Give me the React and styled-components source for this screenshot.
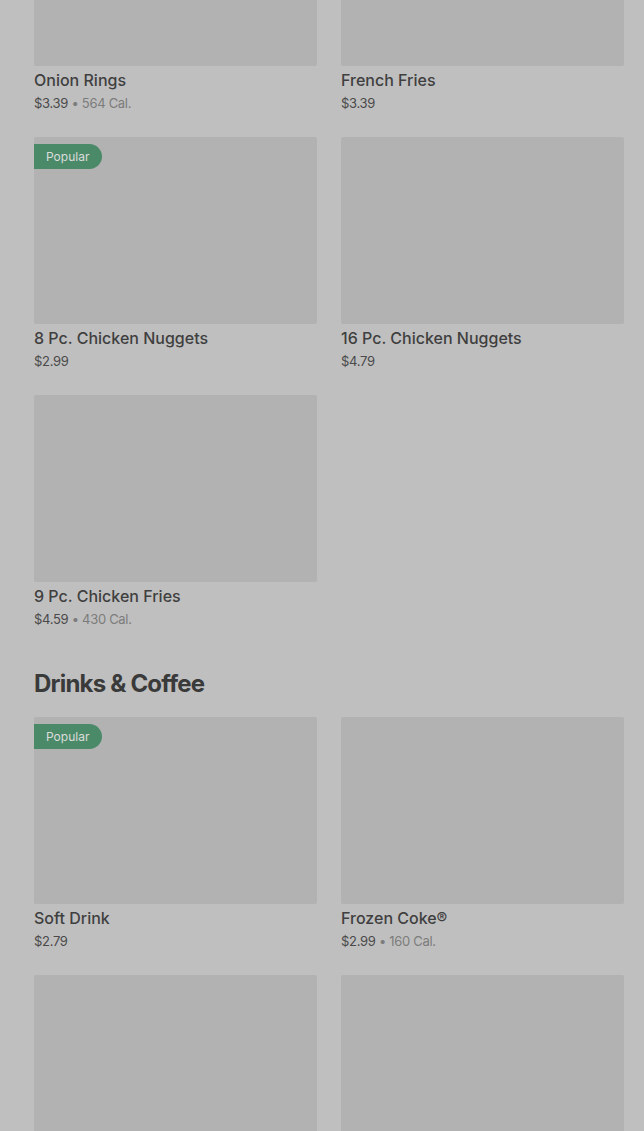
import React from 'react';
import styled, { createGlobalStyle } from 'styled-components';

const GlobalStyle = createGlobalStyle`
  html, body {
    margin: 0;
    padding: 0;
    background: #bfbfbf;
    overflow: hidden;
  }
  body {
    font-family: Inter, 'Liberation Sans', sans-serif;
  }
`;

const Page = styled.div`
  padding: 0 20px 0 34px;
  margin-top: -121px;
`;

const Section = styled.section`
  display: flex;
  flex-direction: column;
  margin-bottom: 41px;
`;

const Heading = styled.h2`
  margin: 0 0 18px 0;
  font-size: 24px;
  line-height: 30px;
  font-weight: 700;
  letter-spacing: -0.8px;
  color: #3a3a3a;
`;

const Grid = styled.div`
  display: grid;
  grid-template-columns: 283px 283px;
  column-gap: 24px;
  row-gap: 25px;
`;

const Card = styled.div`
  display: flex;
  flex-direction: column;
`;

const Thumb = styled.div`
  position: relative;
  height: 187px;
  background: #b2b2b2;
  border-radius: 2px;
`;

const Badge = styled.span`
  position: absolute;
  top: 7px;
  left: 0;
  height: 25px;
  padding: 0 13px 0 12px;
  display: flex;
  align-items: center;
  background: #4b8a69;
  color: #dcdcdc;
  font-size: 12px;
  border-radius: 0 13px 13px 0;
`;

const Title = styled.div`
  margin-top: 4px;
  font-size: 16px;
  line-height: 20px;
  font-weight: 500;
  color: #3f3f3f;
`;

const Meta = styled.div`
  margin-top: 4px;
  font-size: 13px;
  line-height: 18px;
  color: #4a4a4a;
  letter-spacing: -0.3px;
`;

const Cal = styled.span`
  color: #7c7c7c;
`;

const sides = [
  { name: 'Onion Rings', price: '$3.39', cal: '564 Cal.' },
  { name: 'French Fries', price: '$3.39' },
  { name: '8 Pc. Chicken Nuggets', price: '$2.99', popular: true },
  { name: '16 Pc. Chicken Nuggets', price: '$4.79' },
  { name: '9 Pc. Chicken Fries', price: '$4.59', cal: '430 Cal.' },
];

const drinks = [
  { name: 'Soft Drink', price: '$2.79', popular: true },
  { name: 'Frozen Coke®', price: '$2.99', cal: '160 Cal.' },
  { name: 'Iced Coffee', price: '$2.49' },
  { name: 'Coffee', price: '$1.99' },
];

const Item = ({ item }) => (
  <Card>
    <Thumb>{item.popular && <Badge>Popular</Badge>}</Thumb>
    <Title>{item.name}</Title>
    <Meta>
      {item.price}
      {item.cal && <Cal> • {item.cal}</Cal>}
    </Meta>
  </Card>
);

const App = () => (
  <>
    <GlobalStyle />
    <Page>
      <Section>
        <Grid>
          {sides.map(item => (
            <Item key={item.name} item={item} />
          ))}
        </Grid>
      </Section>
      <Section>
        <Heading>Drinks &amp; Coffee</Heading>
        <Grid>
          {drinks.map(item => (
            <Item key={item.name} item={item} />
          ))}
        </Grid>
      </Section>
    </Page>
  </>
);

export default App;
